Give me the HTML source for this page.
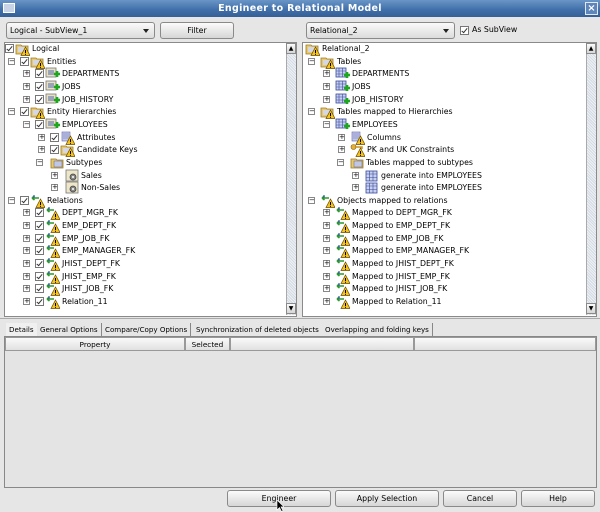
<!DOCTYPE html>
<html><head><meta charset="utf-8"><style>
*{margin:0;padding:0;box-sizing:border-box}
body{width:600px;height:512px;background:#e6e6e6;font-family:"DejaVu Sans","Liberation Sans",sans-serif;font-size:7.8px;color:#000;position:relative;overflow:hidden}
.a{position:absolute}
.title{left:0;top:0;width:600px;height:17px;background:linear-gradient(#6a95c6,#3f6ea8 60%,#355f96);color:#fff;font-weight:bold;font-size:9.5px;text-align:center;line-height:17px;letter-spacing:.3px}
.combo{height:17px;border:1px solid #8a8a8a;border-radius:3px;background:linear-gradient(#fafafa,#dcdcdc);line-height:15px;padding-left:3px}
.combo:after{content:"";position:absolute;right:5px;top:6px;border:3.5px solid transparent;border-top:4px solid #222}
.btn{height:17px;border:1px solid #8a8a8a;border-radius:3px;background:linear-gradient(#fbfbfb,#d6d6d6);text-align:center;line-height:15px}
.pane{border:1px solid #8a8a8a;background:#fff;overflow:hidden}
.sb{width:10px;background:repeating-linear-gradient(45deg,#d4dbe4 0 1px,#eef1f5 1px 2px);border-left:1px solid #aaa}
.r{position:absolute;height:12px;line-height:12px;white-space:nowrap}
.ex{position:absolute;top:2px;width:7px;height:7px;border:1px solid #888;background:#fff;font-size:7px;line-height:5px;text-align:center;color:#000}
.cb{position:absolute;top:1px;width:9px;height:9px;border:1px solid #777;background:#fff}
.cb:after{content:"";position:absolute;left:2px;top:0px;width:2px;height:5px;border:solid #333;border-width:0 1px 1px 0;transform:rotate(40deg)}
.ic{position:absolute;top:-1px;width:15px;height:14px}
.t{position:absolute;top:0}
.tab{top:323px;height:13px;line-height:13px;border-right:1px solid #888;padding:0 3px;background:#e6e6e6;font-size:7.1px;white-space:nowrap}
.th{top:337px;height:14px;line-height:14px;border:1px solid #999;background:linear-gradient(#fafafa,#e0e0e0);text-align:center;font-size:7.3px}
</style></head><body>
<svg width="0" height="0" style="position:absolute">
<defs>
<symbol id="warn" viewBox="0 0 15 14"><path d="M10.5 5 L15 13.5 L6 13.5Z" fill="#f3c320" stroke="#6b4a00" stroke-width=".7"/><rect x="10" y="8" width="1" height="3" fill="#000"/><rect x="10" y="11.8" width="1" height="1" fill="#000"/></symbol>
<symbol id="fw" viewBox="0 0 15 14"><path d="M1 3h5l1 1h6v8H1z" fill="#e8c86a" stroke="#9a7b2a" stroke-width=".8"/><rect x="3" y="5" width="8" height="5" fill="#d4d8e6"/><use href="#warn"/></symbol>
<symbol id="fold" viewBox="0 0 15 14"><path d="M1 3h5l1 1h6v8H1z" fill="#e8c86a" stroke="#9a7b2a" stroke-width=".8"/><rect x="4" y="5" width="8" height="6" fill="#c0c6e6" stroke="#667" stroke-width=".5"/></symbol>
<symbol id="ent" viewBox="0 0 15 14"><rect x="1" y="1" width="10" height="9" fill="#e8e0c0" stroke="#777" stroke-width=".8"/><rect x="3" y="3" width="6" height="5" fill="#9aa4b8"/><path d="M9 7h6M12 4v6" stroke="#1fa61f" stroke-width="2.6"/></symbol>
<symbol id="tbl" viewBox="0 0 15 14"><rect x="1" y="1" width="10" height="9" fill="#c8d0f0" stroke="#3a4a9a" stroke-width=".8"/><path d="M1 4h10M1 7h10M4 1v9M7.5 1v9" stroke="#3a4a9a" stroke-width=".6"/><path d="M9 8h6M12 5v6" stroke="#1fa61f" stroke-width="2.6"/></symbol>
<symbol id="grid" viewBox="0 0 15 14"><rect x="2" y="2" width="11" height="10" fill="#c8d0f0" stroke="#3a4a9a" stroke-width=".8"/><path d="M2 5h11M2 8.5h11M5.5 2v10M9 2v10" stroke="#3a4a9a" stroke-width=".6"/></symbol>
<symbol id="attr" viewBox="0 0 15 14"><rect x="2" y="1" width="8" height="9" fill="#c0c8e8" stroke="#66a" stroke-width=".6"/><path d="M3 3h6M3 5h6M3 7h6" stroke="#66a" stroke-width=".6"/><use href="#warn"/></symbol>
<symbol id="gear" viewBox="0 0 15 14"><rect x="1" y="1" width="12" height="11" fill="#eee6c8" stroke="#777" stroke-width=".8"/><circle cx="8" cy="8" r="3" fill="#888" stroke="#444" stroke-width=".8"/><circle cx="8" cy="8" r="1" fill="#fff"/></symbol>
<symbol id="rel" viewBox="0 0 15 14"><path d="M2 4h7M2 4l2.5-2M2 4l2.5 2" stroke="#2a9a2a" stroke-width="1.6" fill="none"/><path d="M4 1v3" stroke="#3a5ab0" stroke-width="1.2"/><use href="#warn"/></symbol>
<symbol id="key" viewBox="0 0 15 14"><circle cx="3.5" cy="4" r="2.5" fill="#e8b030" stroke="#8a6000" stroke-width=".6"/><path d="M6 4h6v2" stroke="#c89020" stroke-width="1.5" fill="none"/><use href="#warn"/></symbol>
</defs></svg>

<div class="a title">Engineer to Relational Model</div>
<div class="a" style="left:3px;top:3px;width:12px;height:10px;border:1px solid #fff;background:#c8d4e6"></div>
<div class="a" style="left:585px;top:2px;width:13px;height:13px;background:#5e86bb;border:1px solid #dfe8f4;color:#fff;font-weight:bold;font-size:10px;line-height:11px;text-align:center">×</div>

<div class="a combo" style="left:6px;top:22px;width:149px">Logical - SubView_1</div>
<div class="a btn" style="left:160px;top:22px;width:74px">Filter</div>
<div class="a combo" style="left:306px;top:22px;width:149px">Relational_2</div>
<div class="a cb" style="left:460px;top:26px;position:absolute"></div>
<div class="a" style="left:472px;top:25px;line-height:10px">As SubView</div>

<div class="a pane" style="left:4px;top:42px;width:293px;height:275px"></div>
<div class="a sb" style="left:286px;top:43px;height:272px"></div>
<div class="a btn" style="left:286px;top:43px;width:10px;height:11px;border-radius:0;font-size:6px;line-height:9px">▲</div>
<div class="a btn" style="left:286px;top:303px;width:10px;height:11px;border-radius:0;font-size:6px;line-height:9px">▼</div>
<div class="a pane" style="left:302px;top:42px;width:295px;height:275px"></div>
<div class="a sb" style="left:586px;top:43px;height:272px"></div>
<div class="a btn" style="left:586px;top:43px;width:10px;height:11px;border-radius:0;font-size:6px;line-height:9px">▲</div>
<div class="a btn" style="left:586px;top:303px;width:10px;height:11px;border-radius:0;font-size:6px;line-height:9px">▼</div>

<!-- LEFT TREE -->
<div class="r" style="top:43px"><span class="cb" style="left:5px"></span><svg class="ic" style="left:15px"><use href="#fw"/></svg><span class="t" style="left:32px">Logical</span></div>
<div class="r" style="top:55.6px"><span class="ex" style="left:8px">−</span><span class="cb" style="left:20px"></span><svg class="ic" style="left:30px"><use href="#fw"/></svg><span class="t" style="left:47px">Entities</span></div>
<div class="r" style="top:68.3px"><span class="ex" style="left:23px">+</span><span class="cb" style="left:35px"></span><svg class="ic" style="left:45px"><use href="#ent"/></svg><span class="t" style="left:62px">DEPARTMENTS</span></div>
<div class="r" style="top:80.9px"><span class="ex" style="left:23px">+</span><span class="cb" style="left:35px"></span><svg class="ic" style="left:45px"><use href="#ent"/></svg><span class="t" style="left:62px">JOBS</span></div>
<div class="r" style="top:93.6px"><span class="ex" style="left:23px">+</span><span class="cb" style="left:35px"></span><svg class="ic" style="left:45px"><use href="#ent"/></svg><span class="t" style="left:62px">JOB_HISTORY</span></div>
<div class="r" style="top:106.2px"><span class="ex" style="left:8px">−</span><span class="cb" style="left:20px"></span><svg class="ic" style="left:30px"><use href="#fw"/></svg><span class="t" style="left:47px">Entity Hierarchies</span></div>
<div class="r" style="top:118.9px"><span class="ex" style="left:23px">−</span><span class="cb" style="left:35px"></span><svg class="ic" style="left:45px"><use href="#ent"/></svg><span class="t" style="left:62px">EMPLOYEES</span></div>
<div class="r" style="top:131.5px"><span class="ex" style="left:38px">+</span><span class="cb" style="left:50px"></span><svg class="ic" style="left:60px"><use href="#attr"/></svg><span class="t" style="left:77px">Attributes</span></div>
<div class="r" style="top:144.2px"><span class="ex" style="left:38px">+</span><span class="cb" style="left:50px"></span><svg class="ic" style="left:60px"><use href="#fw"/></svg><span class="t" style="left:77px">Candidate Keys</span></div>
<div class="r" style="top:156.8px"><span class="ex" style="left:36px">−</span><svg class="ic" style="left:50px"><use href="#fold"/></svg><span class="t" style="left:66px">Subtypes</span></div>
<div class="r" style="top:169.5px"><span class="ex" style="left:51px">+</span><svg class="ic" style="left:65px"><use href="#gear"/></svg><span class="t" style="left:81px">Sales</span></div>
<div class="r" style="top:182.1px"><span class="ex" style="left:51px">+</span><svg class="ic" style="left:65px"><use href="#gear"/></svg><span class="t" style="left:81px">Non-Sales</span></div>
<div class="r" style="top:194.8px"><span class="ex" style="left:8px">−</span><span class="cb" style="left:20px"></span><svg class="ic" style="left:30px"><use href="#rel"/></svg><span class="t" style="left:47px">Relations</span></div>
<div class="r" style="top:207.4px"><span class="ex" style="left:23px">+</span><span class="cb" style="left:35px"></span><svg class="ic" style="left:45px"><use href="#rel"/></svg><span class="t" style="left:62px">DEPT_MGR_FK</span></div>
<div class="r" style="top:220.1px"><span class="ex" style="left:23px">+</span><span class="cb" style="left:35px"></span><svg class="ic" style="left:45px"><use href="#rel"/></svg><span class="t" style="left:62px">EMP_DEPT_FK</span></div>
<div class="r" style="top:232.7px"><span class="ex" style="left:23px">+</span><span class="cb" style="left:35px"></span><svg class="ic" style="left:45px"><use href="#rel"/></svg><span class="t" style="left:62px">EMP_JOB_FK</span></div>
<div class="r" style="top:245.4px"><span class="ex" style="left:23px">+</span><span class="cb" style="left:35px"></span><svg class="ic" style="left:45px"><use href="#rel"/></svg><span class="t" style="left:62px">EMP_MANAGER_FK</span></div>
<div class="r" style="top:258px"><span class="ex" style="left:23px">+</span><span class="cb" style="left:35px"></span><svg class="ic" style="left:45px"><use href="#rel"/></svg><span class="t" style="left:62px">JHIST_DEPT_FK</span></div>
<div class="r" style="top:270.7px"><span class="ex" style="left:23px">+</span><span class="cb" style="left:35px"></span><svg class="ic" style="left:45px"><use href="#rel"/></svg><span class="t" style="left:62px">JHIST_EMP_FK</span></div>
<div class="r" style="top:283.3px"><span class="ex" style="left:23px">+</span><span class="cb" style="left:35px"></span><svg class="ic" style="left:45px"><use href="#rel"/></svg><span class="t" style="left:62px">JHIST_JOB_FK</span></div>
<div class="r" style="top:296px"><span class="ex" style="left:23px">+</span><span class="cb" style="left:35px"></span><svg class="ic" style="left:45px"><use href="#rel"/></svg><span class="t" style="left:62px">Relation_11</span></div>

<!-- RIGHT TREE -->
<div class="r" style="top:43px"><svg class="ic" style="left:305px"><use href="#fw"/></svg><span class="t" style="left:322px">Relational_2</span></div>
<div class="r" style="top:55.6px"><span class="ex" style="left:308px">−</span><svg class="ic" style="left:320px"><use href="#fw"/></svg><span class="t" style="left:337px">Tables</span></div>
<div class="r" style="top:68.3px"><span class="ex" style="left:323px">+</span><svg class="ic" style="left:335px"><use href="#tbl"/></svg><span class="t" style="left:352px">DEPARTMENTS</span></div>
<div class="r" style="top:80.9px"><span class="ex" style="left:323px">+</span><svg class="ic" style="left:335px"><use href="#tbl"/></svg><span class="t" style="left:352px">JOBS</span></div>
<div class="r" style="top:93.6px"><span class="ex" style="left:323px">+</span><svg class="ic" style="left:335px"><use href="#tbl"/></svg><span class="t" style="left:352px">JOB_HISTORY</span></div>
<div class="r" style="top:106.2px"><span class="ex" style="left:308px">−</span><svg class="ic" style="left:320px"><use href="#fw"/></svg><span class="t" style="left:337px">Tables mapped to Hierarchies</span></div>
<div class="r" style="top:118.9px"><span class="ex" style="left:323px">−</span><svg class="ic" style="left:335px"><use href="#tbl"/></svg><span class="t" style="left:352px">EMPLOYEES</span></div>
<div class="r" style="top:131.5px"><span class="ex" style="left:338px">+</span><svg class="ic" style="left:350px"><use href="#attr"/></svg><span class="t" style="left:367px">Columns</span></div>
<div class="r" style="top:144.2px"><span class="ex" style="left:338px">+</span><svg class="ic" style="left:350px"><use href="#key"/></svg><span class="t" style="left:367px">PK and UK Constraints</span></div>
<div class="r" style="top:156.8px"><span class="ex" style="left:337px">−</span><svg class="ic" style="left:350px"><use href="#fold"/></svg><span class="t" style="left:366px">Tables mapped to subtypes</span></div>
<div class="r" style="top:169.5px"><span class="ex" style="left:352px">+</span><svg class="ic" style="left:364px"><use href="#grid"/></svg><span class="t" style="left:381px">generate into EMPLOYEES</span></div>
<div class="r" style="top:182.1px"><span class="ex" style="left:352px">+</span><svg class="ic" style="left:364px"><use href="#grid"/></svg><span class="t" style="left:381px">generate into EMPLOYEES</span></div>
<div class="r" style="top:194.8px"><span class="ex" style="left:308px">−</span><svg class="ic" style="left:320px"><use href="#rel"/></svg><span class="t" style="left:337px">Objects mapped to relations</span></div>
<div class="r" style="top:207.4px"><span class="ex" style="left:323px">+</span><svg class="ic" style="left:335px"><use href="#rel"/></svg><span class="t" style="left:352px">Mapped to DEPT_MGR_FK</span></div>
<div class="r" style="top:220.1px"><span class="ex" style="left:323px">+</span><svg class="ic" style="left:335px"><use href="#rel"/></svg><span class="t" style="left:352px">Mapped to EMP_DEPT_FK</span></div>
<div class="r" style="top:232.7px"><span class="ex" style="left:323px">+</span><svg class="ic" style="left:335px"><use href="#rel"/></svg><span class="t" style="left:352px">Mapped to EMP_JOB_FK</span></div>
<div class="r" style="top:245.4px"><span class="ex" style="left:323px">+</span><svg class="ic" style="left:335px"><use href="#rel"/></svg><span class="t" style="left:352px">Mapped to EMP_MANAGER_FK</span></div>
<div class="r" style="top:258px"><span class="ex" style="left:323px">+</span><svg class="ic" style="left:335px"><use href="#rel"/></svg><span class="t" style="left:352px">Mapped to JHIST_DEPT_FK</span></div>
<div class="r" style="top:270.7px"><span class="ex" style="left:323px">+</span><svg class="ic" style="left:335px"><use href="#rel"/></svg><span class="t" style="left:352px">Mapped to JHIST_EMP_FK</span></div>
<div class="r" style="top:283.3px"><span class="ex" style="left:323px">+</span><svg class="ic" style="left:335px"><use href="#rel"/></svg><span class="t" style="left:352px">Mapped to JHIST_JOB_FK</span></div>
<div class="r" style="top:296px"><span class="ex" style="left:323px">+</span><svg class="ic" style="left:335px"><use href="#rel"/></svg><span class="t" style="left:352px">Mapped to Relation_11</span></div>

<!-- bottom panel -->
<div class="a" style="left:0;top:318px;width:600px;height:2px;border-top:1px solid #aaa"></div>
<div class="a tab" style="left:6px;background:#f0f0f0">Details</div>
<div class="a tab" style="left:37px">General Options</div>
<div class="a tab" style="left:102px">Compare/Copy Options</div>
<div class="a tab" style="left:193px">Synchronization of deleted objects</div>
<div class="a tab" style="left:322px">Overlapping and folding keys</div>
<div class="a" style="left:4px;top:336px;width:593px;height:152px;border:1px solid #888;background:#e4e4e4"></div>
<div class="a th" style="left:5px;width:180px">Property</div>
<div class="a th" style="left:185px;width:45px">Selected</div>
<div class="a th" style="left:230px;width:184px"></div>
<div class="a th" style="left:414px;width:182px"></div>

<div class="a btn" style="left:227px;top:490px;width:104px">Engineer</div>
<div class="a btn" style="left:335px;top:490px;width:104px">Apply Selection</div>
<div class="a btn" style="left:443px;top:490px;width:74px">Cancel</div>
<div class="a btn" style="left:521px;top:490px;width:74px">Help</div>
<svg class="a" style="left:276px;top:500px" width="8" height="12"><path d="M1 0v10l2.5-2.5 2 4 1.5-.8-2-3.8H8z" fill="#000" stroke="#fff" stroke-width=".6"/></svg>
</body></html>
